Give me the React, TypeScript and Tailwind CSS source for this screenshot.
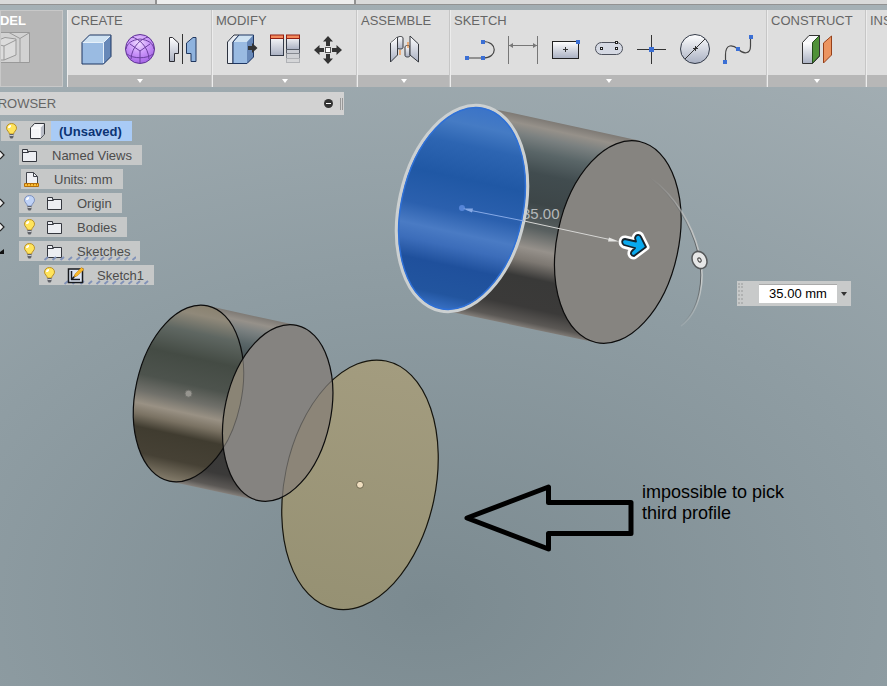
import type { ReactNode } from 'react';

function Icon({ children, w = 34 }: { children: ReactNode; w?: number }) {
  return (
    <svg width={w} height="34" viewBox={`0 0 ${w} 34`} fill="none" aria-hidden="true">
      {children}
    </svg>
  );
}

function BoxIcon() {
  return (
    <Icon>
      <path d="M2 9.500 9.500 2H31V23.500L23.500 31H2Z" fill="#9abbe2" />
      <path d="M2 9.500 9.500 2H31L23.500 9.500Z" fill="#cfe2f2" />
      <path d="M23.500 9.500 31 2V23.500L23.500 31Z" fill="#6788b8" />
      <path d="M3 9.500H23.500V30M23.500 9.500 30.500 2.500" stroke="#e6f0fa" />
      <path d="M2 9.500 9.500 2H31V23.500L23.500 31H2Z" stroke="#1f3763" />
    </Icon>
  );
}

function SphereIcon() {
  return (
    <Icon>
      <defs>
        <radialGradient id="sphere" cx="0.450" cy="0.300" r="0.700">
          <stop offset="0" stopColor="#f0dcff" />
          <stop offset="0.500" stopColor="#cb97fa" />
          <stop offset="1" stopColor="#a564e6" />
        </radialGradient>
      </defs>
      <circle cx="17" cy="16" r="14.500" fill="url(#sphere)" stroke="#5f3494" />
      <g stroke="#6b3fa0">
        <path d="M17 18V30M17 18 7 11M17 18 27 11" />
        <path d="M3 16C4 10 9 7 17 6C25 7 30 10 31 16" />
        <path d="M9 4C16 6 25 13 26 26M25 4C18 6 9 13 8 26" />
        <path d="M4 21C10 26 24 26 30 21" />
      </g>
    </Icon>
  );
}

function MirrorIcon() {
  return (
    <Icon>
      <defs>
        <linearGradient id="steel" x1="0" y1="0" x2="0" y2="1">
          <stop offset="0" stopColor="#fff" />
          <stop offset="1" stopColor="#a9b0c2" />
        </linearGradient>
      </defs>
      <path d="M3.500 4.500H6.500L12.500 10V20.500H8.500V28.500H3.500Z" fill="url(#steel)" stroke="#2c2c33" />
      <path d="M30 4.500H27L20.500 10V20.500H25V28.500H30Z" fill="#8fb3de" stroke="#20375f" />
      <path d="M16.500 1V31" stroke="#333" />
    </Icon>
  );
}

function PressPullIcon() {
  return (
    <Icon>
      <path d="M2.500 9 9 2H14L8 9V30.500H2.500Z" fill="#e9edf3" stroke="#2c3340" />
      <path d="M8 9 14 2H28.500V24L22 30.500H8Z" fill="#9abbe2" />
      <path d="M8 9 14 2H28.500L22 9Z" fill="#cfe2f2" />
      <path d="M22 9 28.500 2V24L22 30.500Z" fill="#6788b8" />
      <path d="M8 9 14 2H28.500V24L22 30.500H8Z" stroke="#1f3763" />
      <path d="M23 13H27V10L32.500 15 27 20V17H23Z" fill="#333" />
    </Icon>
  );
}

function ParametersIcon() {
  return (
    <Icon>
      <rect x="2.500" y="2.500" width="13" height="20" fill="url(#steel)" stroke="#333a48" />
      <rect x="2.500" y="2" width="13" height="3.500" fill="#f48a5c" stroke="#931f12" />
      <rect x="18.500" y="2.500" width="13" height="14" fill="url(#steel)" stroke="#333a48" />
      <rect x="18.500" y="2" width="13" height="3.500" fill="#f48a5c" stroke="#931f12" />
      <rect x="18.500" y="16.500" width="13" height="4" fill="#c9ccd3" stroke="#555b66" />
      <rect x="18.500" y="20.500" width="13" height="5" fill="#cfd1d5" stroke="#858990" />
      <rect x="18.500" y="25.500" width="13" height="4" fill="#d5d6d8" stroke="#b0b2b6" />
    </Icon>
  );
}

function MoveIcon() {
  return (
    <Icon>
      <g fill="#333">
        <path d="M17 3 22 8.500H19V13H15V8.500H12Z" />
        <path d="M17 31 22 25.500H19V21H15V25.500H12Z" />
        <path d="M3 17 8.500 12V15H13V19H8.500V22Z" />
        <path d="M31 17 25.500 12V15H21V19H25.500V22Z" />
      </g>
      <rect x="14.500" y="14.500" width="5" height="5" fill="#fff" stroke="#555" />
    </Icon>
  );
}

function JointIcon() {
  return (
    <Icon>
      <g stroke="#34373d" fill="url(#steel)">
        <path d="M3.500 10 10.500 4V22L3.500 29Z" />
        <path d="M10.500 5C10.500 3 16 3 16 5V14.500C16 16.500 10.500 16.500 10.500 14.500Z" />
        <path d="M18 14C18 12 23 12 23 14V22.500C23 24.500 18 24.500 18 22.500Z" />
        <path d="M23 3 31.500 11V29L23 22Z" />
      </g>
      <path d="M4 10.500 10 5" stroke="#fff" />
      <path d="M13 17V22M21 9V15" stroke="#f07c1c" />
    </Icon>
  );
}

function Node({ x, y }: { x: number; y: number }) {
  return <rect x={x - 2} y={y - 2} width="4" height="4" fill="#3b6fd4" />;
}

function LineIcon() {
  return (
    <Icon>
      <path d="M4 25H20C35 25 35 8.500 20 8.500" stroke="#444" strokeWidth="1.200" />
      <Node x={4} y={25} />
      <Node x={20} y={25} />
      <Node x={20} y={9} />
    </Icon>
  );
}

function DimensionIcon() {
  return (
    <Icon>
      <path d="M2.500 3V31M31.500 3V31" stroke="#777" />
      <path d="M3 12.500H31" stroke="#777" />
      <path d="M3 12.500 7 10V15ZM31 12.500 27 10V15Z" fill="#777" />
    </Icon>
  );
}

function RectangleIcon() {
  return (
    <Icon>
      <rect x="3.500" y="8.500" width="26" height="17" fill="url(#steel)" stroke="#222" />
      <path d="M14 16.500H19M16.500 14V19" stroke="#333" />
      <Node x={29} y={9} />
    </Icon>
  );
}

function SlotIcon() {
  return (
    <Icon>
      <rect x="3.500" y="9.500" width="27" height="12" rx="6" fill="#d5d9e3" stroke="#4c505b" />
      <g fill="#fff" stroke="#222">
        <rect x="8.500" y="14.500" width="2" height="2" />
        <rect x="23.500" y="14.500" width="2" height="2" />
        <rect x="23.500" y="8.500" width="2" height="2" />
      </g>
    </Icon>
  );
}

function PointIcon() {
  return (
    <Icon>
      <path d="M2 16.500H31M16.500 2V31" stroke="#333" />
      <rect x="14" y="14" width="5" height="5" fill="#3b6fd4" />
    </Icon>
  );
}

function CircleIcon() {
  return (
    <Icon>
      <circle cx="17" cy="16" r="14.500" fill="url(#steel)" stroke="#333a48" />
      <path d="M7 26 27 6M15 15.500H20M17.500 13V18" stroke="#333" />
    </Icon>
  );
}

function SplineIcon() {
  return (
    <Icon>
      <path d="M4.500 28V22C4.500 10 12 12 17 16C22 21 29.500 22 29.500 13V5" stroke="#444" strokeWidth="1.200" />
      <Node x={4} y={29} />
      <Node x={17} y={16} />
      <Node x={30} y={4} />
    </Icon>
  );
}

function PlaneIcon() {
  return (
    <Icon>
      <path d="M2.500 9.500 9 2.500H19V23L12.500 30.500H2.500Z" fill="#f7f8fa" />
      <path d="M2.500 9.500H12.500V30.500H2.500Z" fill="url(#steel)" />
      <path d="M12.500 9.500 19.500 2.500V23L12.500 30.500Z" fill="#4f9138" stroke="#234d19" />
      <path d="M2.500 9.500 9 2.500H19.500V23L12.500 30.500H2.500Z" stroke="#333" />
      <path d="M23.500 10 31.500 3V22L23.500 30Z" fill="#ec9460" stroke="#96401a" />
    </Icon>
  );
}

type PanelProps = { title: string; width: string; tools: [string, ReactNode][] };

const panels: PanelProps[] = [
  { title: 'CREATE', width: 'w-[145px]', tools: [['Box', <BoxIcon />], ['Form', <SphereIcon />], ['Mirror', <MirrorIcon />]] },
  { title: 'MODIFY', width: 'w-[145px]', tools: [['Press pull', <PressPullIcon />], ['Parameters', <ParametersIcon />], ['Move', <MoveIcon />]] },
  { title: 'ASSEMBLE', width: 'w-[93px]', tools: [['Joint', <JointIcon />]] },
  {
    title: 'SKETCH',
    width: 'w-[317px]',
    tools: [
      ['Line', <LineIcon />],
      ['Dimension', <DimensionIcon />],
      ['Rectangle', <RectangleIcon />],
      ['Slot', <SlotIcon />],
      ['Point', <PointIcon />],
      ['Circle', <CircleIcon />],
      ['Spline', <SplineIcon />],
    ],
  },
  { title: 'CONSTRUCT', width: 'w-[99px]', tools: [['Plane', <PlaneIcon />]] },
];

function Panel({ title, width, tools }: PanelProps) {
  return (
    <section className={`${width} flex shrink-0 flex-col border-r border-[#c6c6c6] border-l border-l-[#ececec]`}>
      <h2 className="h-5 px-[3px] pt-px text-[13px] leading-5 text-[#666]">{title}</h2>
      <div className="flex h-[45px] justify-center">
        {tools.map(([name, icon]) => (
          <button key={name} type="button" aria-label={name} className="flex h-10 w-[43px] items-center justify-center">
            {icon}
          </button>
        ))}
      </div>
      <button type="button" aria-label={`${title} menu`} className="flex h-3 items-center justify-center bg-[#b7b7b7]">
        <svg width="6" height="4" viewBox="0 0 6 4" aria-hidden="true">
          <path d="M0 0H6L3 4Z" fill="#fff" />
        </svg>
      </button>
    </section>
  );
}

function Bulb({ off = false }: { off?: boolean }) {
  return (
    <svg width="20" height="16" viewBox="0 0 20 16" aria-hidden="true">
      <path
        d="M10.500 0.500C7.500 0.500 5.500 2.500 5.500 5.200C5.500 7.500 8 8.500 8.500 11H12.500C13 8.500 15.500 7.500 15.500 5.200C15.500 2.500 13.500 0.500 10.500 0.500Z"
        fill={off ? '#bfd2f6' : '#ffe45c'}
        stroke={off ? '#7d91bd' : '#b8902a'}
      />
      <path d="M8 5C8 4 9 3 10 3" stroke="#fff" strokeWidth="2" fill="none" />
      <path d="M8.500 11H12.500V14L11.500 15.500H9.500L8.500 14Z" fill="#5f6168" />
      <path d="M8.500 12.500H12.500" stroke="#c9cbd0" />
    </svg>
  );
}

function Folder() {
  return (
    <svg width="16" height="14" viewBox="0 0 16 14" aria-hidden="true">
      <path d="M0.500 13.500V1.500H5.500V3.500H14.500V13.500Z" fill="#eceef2" stroke="#34373e" />
      <path d="M1 4.500H6L7.500 3.500" fill="none" stroke="#34373e" />
    </svg>
  );
}

function Cube() {
  return (
    <svg width="16" height="18" viewBox="0 0 16 18" aria-hidden="true">
      <path d="M1.500 6 5.500 1.500H15.500V12L11.500 16.500H1.500Z" fill="#f4f5f7" stroke="#33363c" strokeLinejoin="round" />
      <path d="M11.500 6 15 2V12L11.500 16Z" fill="#b9bdc7" />
      <path d="M2 6H11V16" fill="none" stroke="#fff" />
    </svg>
  );
}

function UnitsIcon() {
  return (
    <svg width="16" height="17" viewBox="0 0 16 17" aria-hidden="true">
      <path d="M2.500 13V1.500H9.500L13.500 5.500V13Z" fill="#eff0f4" stroke="#41444c" />
      <path d="M9.500 1.500V5.500H13.500" fill="none" stroke="#41444c" />
      <path d="M0.500 12.500H14.500V15.500H0.500Z" fill="#f9bd35" stroke="#b66f0a" />
      <path d="M3.500 13V14.500M6.500 13V14.500M9.500 13V14.500M12.500 13V14.500" stroke="#b66f0a" />
    </svg>
  );
}

function SketchIcon() {
  return (
    <svg width="18" height="17" viewBox="0 0 18 17" aria-hidden="true">
      <rect x="1.500" y="2" width="14" height="13.500" fill="#dfe7f5" stroke="#17191d" strokeWidth="1.500" />
      <path d="M4.500 4V12.500H13M5 12 9.500 7.500" stroke="#17191d" strokeWidth="1.500" fill="none" />
      <path d="M7 10 8 7 14.500 0.500 17 2.500 10 9Z" fill="#f9b928" stroke="#b97a10" strokeWidth="0.500" />
    </svg>
  );
}

function Hatch({ id }: { id: string }) {
  return (
    <svg className="absolute right-1 bottom-0 left-6 h-[5px] w-[calc(100%-28px)]" aria-hidden="true">
      <pattern id={id} width="8" height="5" patternUnits="userSpaceOnUse">
        <path d="M1.500 4 5 1" stroke="#8192b8" strokeWidth="2" />
      </pattern>
      <rect width="100%" height="5" fill={`url(#${id})`} />
    </svg>
  );
}

function Expander({ open = false }: { open?: boolean }) {
  return (
    <svg className="absolute top-1 left-0" width="6" height="12" viewBox="0 0 6 12" aria-hidden="true">
      {open ? <path d="M0 7 4 4V9H0Z" fill="#111" /> : <path d="M0 2 4 6 0 10" fill="#eee" stroke="#222" strokeWidth="1.200" />}
    </svg>
  );
}

const rowText = 'pt-px pr-[10px] pl-[14px]';

function Browser() {
  return (
    <aside className="w-[344px] text-[13px] text-[#4c4c4c]">
      <div className="flex h-[23px] items-center justify-between bg-[#d2d2d2]">
        <h2 className="-ml-[11px] text-[#666]">BROWSER</h2>
        <button type="button" aria-label="Collapse browser" className="flex h-5 items-center gap-[7px] pr-px">
          <svg width="9" height="9" viewBox="0 0 9 9" aria-hidden="true">
            <circle cx="4.500" cy="4.500" r="4.500" fill="#333" />
            <path d="M2 4.500H7" stroke="#fff" />
          </svg>
          <span className="h-3 w-[3px] border-x border-[#999]" />
        </button>
      </div>
      <ul className="mt-[6px] space-y-1">
        <li className="flex h-5">
          <div className="ml-px flex items-center bg-[#c6c8c8]">
            <Bulb />
            <span className="mr-[6px] ml-2"><Cube /></span>
            <strong className="h-5 bg-[#a9cbf6] pt-px pr-[10px] pl-2 leading-5 text-[#0c3474]">(Unsaved)</strong>
          </div>
        </li>
        <li className="relative flex h-5">
          <Expander />
          <div className="ml-[19px] flex items-center bg-[#c6c8c8] pl-[3px]">
            <Folder />
            <span className={rowText}>Named Views</span>
          </div>
        </li>
        <li className="flex h-5">
          <div className="ml-[21px] flex items-center bg-[#c6c8c8] pl-[3px]">
            <UnitsIcon />
            <span className={rowText}>Units: mm</span>
          </div>
        </li>
        {['Origin', 'Bodies', 'Sketches'].map((name) => (
          <li key={name} className="relative flex h-5">
            <Expander open={name === 'Sketches'} />
            <div className="relative ml-[19px] flex items-center bg-[#c6c8c8]">
              <Bulb off={name === 'Origin'} />
              <span className="ml-2"><Folder /></span>
              {name === 'Sketches' && <Hatch id="hatch-folder" />}
              <span className={`relative ${rowText}`}>{name}</span>
            </div>
          </li>
        ))}
        <li className="flex h-5">
          <div className="relative ml-[39px] flex items-center bg-[#c6c8c8]">
            <Hatch id="hatch-sketch" />
            <Bulb />
            <span className="relative -mr-0.5 ml-2"><SketchIcon /></span>
            <span className={`relative ${rowText}`}>Sketch1</span>
          </div>
        </li>
      </ul>
    </aside>
  );
}

// 3D scene: two cylinders, the open profile and the extrude manipulator
function Scene() {
  return (
    <svg className="absolute top-0 left-0" width="887" height="686" viewBox="0 0 887 686" fill="none" aria-hidden="true">
      <defs>
        <linearGradient id="body" x1="0" y1="0" x2="0" y2="1">
          <stop offset="0" stopColor="#7e7a75" />
          <stop offset="0.040" stopColor="#96918a" />
          <stop offset="0.090" stopColor="#7a8080" />
          <stop offset="0.160" stopColor="#5a6668" />
          <stop offset="0.260" stopColor="#414c4f" />
          <stop offset="0.400" stopColor="#3d4648" />
          <stop offset="0.520" stopColor="#596060" />
          <stop offset="0.620" stopColor="#96918b" />
          <stop offset="0.680" stopColor="#7d7872" />
          <stop offset="0.760" stopColor="#393938" />
          <stop offset="0.900" stopColor="#3b3a39" />
          <stop offset="0.970" stopColor="#5b5855" />
          <stop offset="1" stopColor="#85807b" />
        </linearGradient>
        <linearGradient id="blue" x1="0" y1="0" x2="0" y2="1">
          <stop offset="0" stopColor="#3a73c8" />
          <stop offset="0.100" stopColor="#457bc4" />
          <stop offset="0.200" stopColor="#2d65b2" />
          <stop offset="0.360" stopColor="#2058a5" />
          <stop offset="0.520" stopColor="#2b60ae" />
          <stop offset="0.620" stopColor="#4a7bc4" />
          <stop offset="0.690" stopColor="#3c6dba" />
          <stop offset="0.780" stopColor="#1f509c" />
          <stop offset="0.920" stopColor="#22559f" />
          <stop offset="1" stopColor="#3a73c8" />
        </linearGradient>
        <linearGradient id="tinted" x1="0" y1="0" x2="0" y2="1">
          <stop offset="0" stopColor="#8a8270" />
          <stop offset="0.060" stopColor="#90897a" />
          <stop offset="0.160" stopColor="#5f6762" />
          <stop offset="0.300" stopColor="#444b44" />
          <stop offset="0.450" stopColor="#4d534d" />
          <stop offset="0.540" stopColor="#70706a" />
          <stop offset="0.610" stopColor="#999184" />
          <stop offset="0.670" stopColor="#7a7263" />
          <stop offset="0.740" stopColor="#403c30" />
          <stop offset="0.880" stopColor="#464135" />
          <stop offset="1" stopColor="#857d6c" />
        </linearGradient>
        <linearGradient id="profile" x1="0" y1="0" x2="0" y2="1">
          <stop offset="0" stopColor="#a39c7f" />
          <stop offset="1" stopColor="#969173" />
        </linearGradient>
        <linearGradient id="arc" x1="0" y1="0" x2="0" y2="1">
          <stop offset="0" stopColor="#c0c2c2" stopOpacity="0" />
          <stop offset="0.350" stopColor="#c0c2c2" />
          <stop offset="0.700" stopColor="#c6caca" />
          <stop offset="1" stopColor="#c8cccc" stopOpacity="0.200" />
        </linearGradient>
        <linearGradient id="arc-shade" x1="0" y1="0" x2="0" y2="1">
          <stop offset="0" stopColor="#5c6062" stopOpacity="0" />
          <stop offset="0.500" stopColor="#5c6062" />
          <stop offset="0.700" stopColor="#5c6062" />
          <stop offset="1" stopColor="#5c6062" stopOpacity="0" />
        </linearGradient>
        <clipPath id="front-face">
          <ellipse cx="277.700" cy="413" rx="52.900" ry="89.700" transform="rotate(12.300 277.700 413)" />
        </clipPath>
      </defs>

      {/* upper cylinder */}
      <path d="M0 -103.500H159.500V102.800L0 104Z" fill="url(#body)" transform="translate(462 208) rotate(12.300)" />
      <ellipse cx="617.800" cy="242" rx="60.700" ry="102.800" fill="#868480" stroke="#0c0c0c" strokeWidth="1.200" transform="rotate(12.200 617.800 242)" />
      <text x="522" y="219" fill="#b4b8b9" fontSize="15" fontFamily="Liberation Sans, Arial, sans-serif">35.00</text>
      <g transform="rotate(12.200 462 208.500)">
        <ellipse cx="462" cy="208.500" rx="62.900" ry="104.500" fill="url(#blue)" stroke="#ccd0d1" strokeWidth="3.500" />
        <ellipse cx="462" cy="208.500" rx="60.800" ry="102.400" stroke="#2f70d6" strokeWidth="1.500" />
      </g>

      {/* lower cylinder */}
      <path d="M0 -89.700H91.500V89.700H0Z" fill="url(#body)" transform="translate(188.500 393.500) rotate(12.300)" />
      <ellipse cx="188.500" cy="393.500" rx="52.900" ry="89.700" fill="url(#tinted)" stroke="#0c0c0c" strokeWidth="1.200" transform="rotate(12.300 188.500 393.500)" />
      <ellipse cx="360" cy="484.800" rx="75.400" ry="126.500" fill="url(#profile)" stroke="#15140d" strokeWidth="1.200" transform="rotate(11.900 360 484.800)" />
      <ellipse cx="277.700" cy="413" rx="52.900" ry="89.700" fill="#858380" transform="rotate(12.300 277.700 413)" />
      <g clipPath="url(#front-face)" stroke="#5e5c58">
        <ellipse cx="188.500" cy="393.500" rx="52.900" ry="89.700" fill="#8a8475" transform="rotate(12.300 188.500 393.500)" />
        <ellipse cx="360" cy="484.800" rx="75.400" ry="126.500" fill="#8c8578" transform="rotate(11.900 360 484.800)" />
      </g>
      <ellipse cx="277.700" cy="413" rx="52.900" ry="89.700" stroke="#0c0c0c" strokeWidth="1.200" transform="rotate(12.300 277.700 413)" />
      <circle cx="188.500" cy="393.700" r="3.500" fill="#96958f" stroke="#6f706b" />
      <circle cx="360" cy="484.800" r="3.500" fill="#f0dfc0" stroke="#6e6850" />

      {/* distance leader */}
      <circle cx="462" cy="208" r="3" fill="#5585d8" />
      <path d="M466 209.500 524 221" stroke="#86a9e6" />
      <path d="M524 221 612 240" stroke="#d6d6d4" />
      <path d="M463 208.500 473 208.500 472 212.500Z" fill="#86a9e6" />
      <path d="M619 241.500 609 237.500 608 241.500Z" fill="#e6e6e4" />

      {/* drag handle */}
      <g strokeLinejoin="round">
        <path
          d="M625 239 636 241.500 635 238C636 234 640 234 641 237L646 247 634 256C631 256 630 253 632 251L635 248 624 245C621 243 622 239 625 239Z"
          fill="#fff"
          stroke="#fff"
          strokeWidth="7"
        />
        <path
          d="M625 239 636 241.500 635 238C636 234 640 234 641 237L646 247 634 256C631 256 630 253 632 251L635 248 624 245C621 243 622 239 625 239Z"
          fill="#09a9ee"
          stroke="#15222b"
          strokeWidth="1.800"
        />
      </g>

      {/* taper ring */}
      <path d="M650 178C674 196 691 224 698 252C705 278 700 311 680 326" stroke="url(#arc-shade)" strokeWidth="1.500" />
      <path d="M651 178C675 196 692 224 699 252C706 278 701 311 681 326" stroke="url(#arc)" strokeWidth="1.500" />
      <ellipse cx="699.500" cy="260" rx="7" ry="9" fill="#e6e7e7" stroke="#55585a" strokeWidth="1.500" transform="rotate(-28 699.500 260)" />
      <ellipse cx="699.500" cy="260" rx="1.500" ry="2.200" stroke="#444" transform="rotate(-28 699.500 260)" />

      <path d="M467 518 548.500 487V502.500H631V533.500H548.500V549Z" stroke="#000" strokeWidth="5" strokeLinejoin="round" />
    </svg>
  );
}

export default function App() {
  return (
    <main
      className="relative min-h-screen overflow-hidden bg-[radial-gradient(110%_95%_at_48%_88%,#7b8a90_0%,#8f9da3_52%,#a5b0b5_100%)]"
      style={{ fontFamily: '"Liberation Sans", Arial, sans-serif' }}
    >
      <Scene />
      <div className="relative flex h-[5px] border-b border-[#929292] bg-[#d9d9d9]">
        <div className="ml-[155px] w-[201px] border-x-2 border-[#929292] bg-[#ededed]" />
      </div>
      <header className="relative mt-[5px] flex h-[77px] overflow-hidden">
        <button type="button" className="mr-1 flex w-[63px] shrink-0 flex-col border border-[#c8c8c8] bg-[#b7b7b7] text-left">
          <span className="-ml-[22px] h-5 text-[13px] leading-5 font-bold text-white">MODEL</span>
          <svg width="29" height="32" viewBox="0 0 29 32" fill="none" stroke="#999" aria-hidden="true">
            <path d="M-1 1.500H28.500V31.500H-1Z" fill="#d2d2d2" />
            <path d="M8 1.500 19 7.500 28 2M19 7.500V31" />
            <path d="M-1 8.500 4 6.500 15 8V24L3 29H-1Z" fill="#dcdcdc" />
            <path d="M-1 14 3 15 15 9M3 15V29" />
          </svg>
        </button>
        <nav className="flex min-w-0 flex-1 bg-[#dedede]">
          {panels.map((panel) => (
            <Panel key={panel.title} {...panel} />
          ))}
          <section className="flex min-w-0 flex-1 flex-col justify-between overflow-hidden border-l border-[#ececec]">
            <h2 className="px-[3px] pt-px text-[13px] leading-5 text-[#666]">INSPECT</h2>
            <div className="h-3 bg-[#b7b7b7]" />
          </section>
        </nav>
      </header>
      <div className="relative mt-[5px]">
        <Browser />
      </div>

      <div className="absolute top-[281px] left-[737px] flex h-[25px] items-center bg-[#c8caca]">
        <span className="mr-4 ml-px h-[21px] w-[5px] border-x-2 border-dotted border-[#b0b2b2]" />
        <input
          aria-label="Distance"
          defaultValue="35.00 mm"
          className="h-[19px] w-[78px] border-t border-[#aaa] bg-white text-center text-[13px] text-black outline-none"
        />
        <button type="button" aria-label="Distance options" className="flex h-5 w-[14px] items-center justify-center">
          <svg width="6" height="4" viewBox="0 0 6 4" aria-hidden="true">
            <path d="M0 0H6L3 4Z" fill="#333" />
          </svg>
        </button>
      </div>

      <p className="absolute top-[482px] left-[642px] text-[18px] leading-[21px] text-black">
        impossible to pick
        <br />
        third profile
      </p>
    </main>
  );
}
